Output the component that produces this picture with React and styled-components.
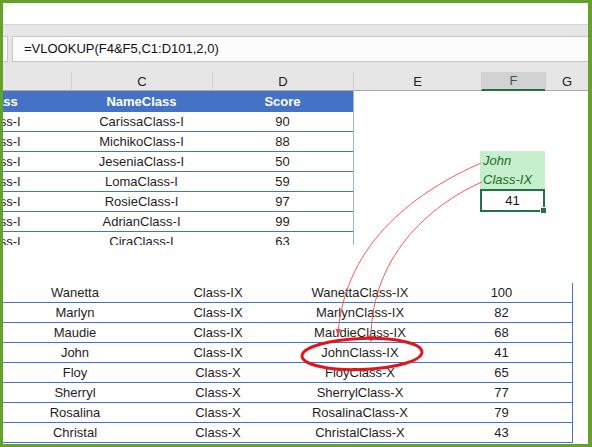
import React from "react";
import styled, { createGlobalStyle } from "styled-components";

const GlobalStyle = createGlobalStyle`
  body {
    margin: 0;
    background: #fff;
    font-family: "Liberation Sans", Arial, sans-serif;
  }
`;

const Frame = styled.div`
  position: relative;
  width: 592px;
  height: 447px;
  box-sizing: border-box;
  border: solid #64a22c;
  border-width: 3px 4px 3px 3px;
  overflow: hidden;
  display: flex;
  flex-direction: column;
  background: #fff;
  color: #1a1a1a;
  font-size: 13px;
`;

const TopStrip = styled.div`
  height: 21px;
  flex: none;
`;

const FormulaBand = styled.div`
  flex: none;
  display: flex;
  background: #e6e6e6;
  border-top: 1px solid #d6d6d6;
  padding-top: 11px;
`;

const NameStub = styled.div`
  width: 5px;
  height: 26px;
  box-sizing: border-box;
  background: #fcfcfc;
  border: 1px solid #c6c6c6;
  border-left: none;
  margin-right: 4px;
`;

const FormulaBox = styled.div`
  flex: 1;
  height: 26px;
  box-sizing: border-box;
  background: #fcfcfc;
  border: 1px solid #c6c6c6;
  border-right: none;
  padding-left: 11px;
  line-height: 24px;
  font-size: 13px;
  color: #111;
`;

const ColumnBand = styled.div`
  flex: none;
  background: #e6e6e6;
  padding-top: 10px;
`;

const ColumnRow = styled.div`
  display: grid;
  grid-template-columns: 68px 141px 141px 128px 64px 1fr;
  height: 19px;
`;

const ColumnCell = styled.div`
  box-sizing: border-box;
  border-left: ${(p) => (p.$first ? "none" : "1px solid #cfcfcf")};
  border-bottom: ${(p) => (p.$active ? "2px solid #217346" : "1px solid #a8a8a8")};
  background: ${(p) => (p.$active ? "#d2d2d2" : "transparent")};
  display: flex;
  align-items: center;
  justify-content: center;
  font-size: 13px;
  color: ${(p) => (p.$active ? "#3a5a48" : "#222")};
`;

const Sheet = styled.div`
  flex: 1;
  display: flex;
  flex-direction: column;
  background: #fff;
`;

const UpperSection = styled.div`
  height: 154px;
  flex: none;
  display: flex;
`;

const UpperTable = styled.div`
  width: 350px;
  overflow: hidden;
  border-right: 1px solid #9db3e0;
`;

const UpperGrid = styled.div`
  display: grid;
  grid-template-columns: 141px 141px 141px;
  margin-left: -73px;
`;

const HeadCell = styled.div`
  height: 21px;
  background: #4472c4;
  color: #fff;
  font-weight: bold;
  display: flex;
  align-items: center;
  justify-content: center;
`;

const BodyCell = styled.div`
  height: 20px;
  box-sizing: border-box;
  border-bottom: 1px solid #4472c4;
  display: flex;
  align-items: center;
  justify-content: center;
  color: #1e1e1e;
`;

const SideArea = styled.div`
  flex: 1;
  padding: 60px 0 0 126px;
`;

const Column = styled.div`
  width: 65px;
  display: flex;
  flex-direction: column;
`;

const GoodBlock = styled.div`
  height: 38px;
  background: #c6efce;
  color: #1f6b1f;
  font-style: italic;
  padding-left: 3px;
  display: flex;
  flex-direction: column;
  justify-content: space-around;
  font-size: 13px;
`;

const ResultCell = styled.div`
  position: relative;
  height: 23px;
  box-sizing: border-box;
  border: 2px solid #217346;
  display: flex;
  align-items: center;
  justify-content: center;
  color: #111;
`;

const FillHandle = styled.span`
  position: absolute;
  right: -3px;
  bottom: -3px;
  width: 5px;
  height: 5px;
  background: #217346;
  border: 1px solid #fff;
  border-width: 1px 0 0 1px;
`;

const Gap = styled.div`
  height: 38px;
  flex: none;
`;

const LowerTable = styled.div`
  width: 569px;
  display: grid;
  grid-template-columns: 144px 142px 142px 1fr;
  border-right: 1px solid #4472c4;
`;

const Overlay = styled.svg`
  position: absolute;
  left: -3px;
  top: -3px;
  width: 592px;
  height: 447px;
  pointer-events: none;
`;

const upper = [
  ["Carissa", 90],
  ["Michiko", 88],
  ["Jesenia", 50],
  ["Loma", 59],
  ["Rosie", 97],
  ["Adrian", 99],
  ["Cira", 63],
  ["Marta", 71],
];

const lower = [
  ["Wanetta", "Class-IX", 100],
  ["Marlyn", "Class-IX", 82],
  ["Maudie", "Class-IX", 68],
  ["John", "Class-IX", 41],
  ["Floy", "Class-X", 65],
  ["Sherryl", "Class-X", 77],
  ["Rosalina", "Class-X", 79],
  ["Christal", "Class-X", 43],
];

const columns = ["", "C", "D", "E", "F", "G"];

export default function App() {
  return (
    <>
      <GlobalStyle />
      <Frame>
        <TopStrip />
        <FormulaBand>
          <NameStub />
          <FormulaBox>=VLOOKUP(F4&amp;F5,C1:D101,2,0)</FormulaBox>
        </FormulaBand>
        <ColumnBand>
          <ColumnRow>
            {columns.map((c, i) => (
              <ColumnCell key={i} $first={i === 0} $active={c === "F"}>
                {c}
              </ColumnCell>
            ))}
          </ColumnRow>
        </ColumnBand>
        <Sheet>
          <UpperSection>
            <UpperTable>
              <UpperGrid>
                <HeadCell>Class</HeadCell>
                <HeadCell>NameClass</HeadCell>
                <HeadCell>Score</HeadCell>
                {upper.map(([name, score]) => (
                  <React.Fragment key={name}>
                    <BodyCell>Class-I</BodyCell>
                    <BodyCell>{name}Class-I</BodyCell>
                    <BodyCell>{score}</BodyCell>
                  </React.Fragment>
                ))}
              </UpperGrid>
            </UpperTable>
            <SideArea>
              <Column>
                <GoodBlock>
                  <span>John</span>
                  <span>Class-IX</span>
                </GoodBlock>
                <ResultCell>
                  41
                  <FillHandle />
                </ResultCell>
              </Column>
            </SideArea>
          </UpperSection>
          <Gap />
          <LowerTable>
            {lower.map(([name, cls, score]) => (
              <React.Fragment key={name}>
                <BodyCell>{name}</BodyCell>
                <BodyCell>{cls}</BodyCell>
                <BodyCell>
                  {name}
                  {cls}
                </BodyCell>
                <BodyCell>{score}</BodyCell>
              </React.Fragment>
            ))}
          </LowerTable>
        </Sheet>
        <Overlay viewBox="0 0 592 447">
          <defs>
            <marker id="arr" viewBox="0 0 6 6" refX="5" refY="3" markerWidth="6" markerHeight="6" orient="auto">
              <path d="M0,0 L6,3 L0,6 z" fill="#f04848" />
            </marker>
          </defs>
          <path d="M481,163 C420,190 345,240 338,334" fill="none" stroke="#f05a5a" strokeWidth="1" markerEnd="url(#arr)" />
          <path d="M482,182 C440,200 370,250 371,341" fill="none" stroke="#f05a5a" strokeWidth="1" markerEnd="url(#arr)" />
          <ellipse cx="362" cy="354" rx="60" ry="15.5" transform="rotate(-2 362 354)" fill="none" stroke="#e3141c" strokeWidth="3" />
        </Overlay>
      </Frame>
    </>
  );
}
